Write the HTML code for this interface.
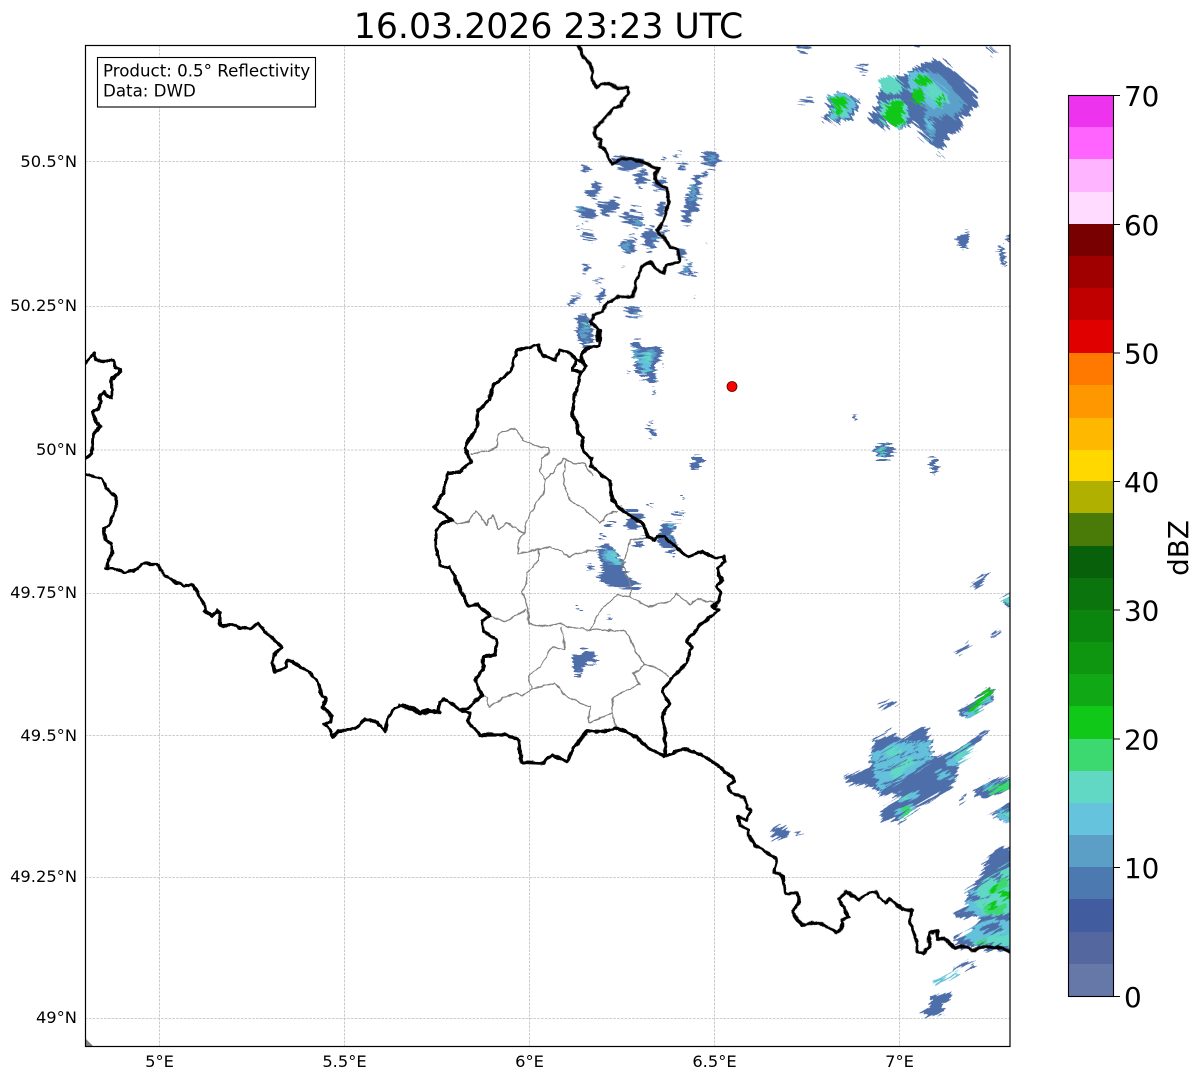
<!DOCTYPE html>
<html><head><meta charset="utf-8"><title>Radar</title>
<style>html,body{margin:0;padding:0;background:#fff}svg{display:block}text{font-family:"DejaVu Sans",sans-serif;fill:#000}</style></head>
<body>
<svg xmlns="http://www.w3.org/2000/svg" width="1202" height="1081" viewBox="0 0 1202 1081">
<defs><clipPath id="ax"><rect x="86" y="46" width="924" height="1000"/></clipPath>
<filter id="rag" filterUnits="userSpaceOnUse" x="-600" y="-600" width="2400" height="2300" color-interpolation-filters="sRGB">
<feTurbulence type="fractalNoise" baseFrequency="0.035 0.42" numOctaves="2" seed="4" result="n"/>
<feDisplacementMap in="SourceGraphic" in2="n" scale="15" xChannelSelector="R" yChannelSelector="G"/>
<feGaussianBlur stdDeviation=".35"/>
</filter>
<filter id="wig" filterUnits="userSpaceOnUse" x="0" y="0" width="1202" height="1081" color-interpolation-filters="sRGB">
<feTurbulence type="fractalNoise" baseFrequency="0.14" numOctaves="2" seed="9" result="n"/>
<feDisplacementMap in="SourceGraphic" in2="n" scale="4" xChannelSelector="R" yChannelSelector="G"/>
<feGaussianBlur stdDeviation=".3"/>
</filter>
</defs>
<rect width="1202" height="1081" fill="#fff"/>
<text x="548.5" y="38" font-size="34.7" text-anchor="middle">16.03.2026 23:23 UTC</text>
<g clip-path="url(#ax)">
<g stroke="#bdbdbd" stroke-width=".8" stroke-dasharray="2.6 1.2" fill="none">
<path d="M159.5 45V1046M344.5 45V1046M529.5 45V1046M714.5 45V1046M899.5 45V1046"/>
<path d="M85 161.5H1010M85 306.5H1010M85 450H1010M85 593.5H1010M85 735.5H1010M85 877.5H1010M85 1018.5H1010"/>
</g>
<path d="M85 1038L93 1046H85z" fill="#808080"/>

<!-- radar NE cell -->
<g transform="rotate(42 732 386)"><g filter="url(#rag)"><g transform="rotate(-42 732 386)">
<g transform="translate(560 40) scale(.33333)">
<g fill="#4e6ea9">
<path d="M1040 100L1105 60 1150 62 1245 150 1258 195 1205 240 1205 262 1165 290 1148 325 1110 315 1080 270 1060 245 1020 270 975 258 925 243 955 185 965 110 1010 115z"/>
<path d="M800 170L850 155 900 180 885 210 875 240 830 247 782 235 810 215z"/>
<path d="M1132 335L1135 335 1158 358 1155 360z"/>
<path d="M1275 17L1290 20 1308 38 1300 42z"/>
</g>
<g fill="#5ba0c8">
<path d="M1100 90L1150 110 1215 190 1195 225 1150 230 1095 240 1100 205 1060 180 1040 100z"/>
<path d="M1095 240L1130 265 1120 290 1095 275z"/>
</g>
<g fill="#63c1db">
<path d="M800 168L855 158 885 185 860 240 810 235 820 205z"/>
<path d="M960 190L1030 180 1048 235 1020 268 965 245z"/>
<path d="M1042 100L1090 92 1160 155 1170 180 1130 205 1095 190 1045 150z"/>
<path d="M1095 240L1120 245 1125 265 1105 265z"/><path d="M1100 285L1125 295 1115 305z"/>
</g>
<g fill="#60d8c4">
<path d="M965 110L1010 115 1040 140 1005 168 958 140z"/>
<path d="M960 195L1000 180 1040 200 1040 245 1015 268 968 248z"/>
<path d="M805 210L860 205 860 235 820 228z"/>
<path d="M1100 105L1140 150 1160 180 1130 200 1100 165z"/>
</g>
<g fill="#10c818">
<path d="M985 190L1025 190 1030 245 1000 265 970 235z"/>
<path d="M1055 145L1090 150 1095 180 1072 190 1050 170z"/>
<path d="M1060 115L1095 105 1115 130 1085 140z"/>
<path d="M1120 178L1150 170 1135 198z"/>
<path d="M815 170L860 175 860 200 835 212 818 198z"/><path d="M805 208L850 212 835 228z"/>
</g>
</g>
</g></g></g>

<!-- radar north -->
<g transform="rotate(8 732 386)"><g filter="url(#rag)"><g transform="rotate(-8 732 386)">
<g transform="translate(560 40) scale(.33333)">
<g fill="#4e6ea9">
<path d="M887 78L920 75 925 100 905 102z"/><path d="M718 180L745 172 763 182 735 192z"/>
<path d="M716 20H752V34H716z"/><path d="M1055 17H1090L1075 28z"/>
<path d="M430 335H468L480 352 462 385 440 380z"/>
<path d="M160 352L250 350 245 385 205 395 165 375z"/><path d="M228 400L258 398 262 432 240 445 228 425z"/>
<path d="M308 350H320V362H308zM342 340H355V353H342zM352 372L376 370 378 392 358 395z"/>
<path d="M405 408L448 393 450 405 420 412 420 460 432 463 415 470 412 505 390 520 395 555 365 545 380 470z"/>
<path d="M278 420L312 412 318 445 290 452z"/><path d="M295 490L315 488 310 525 290 515z"/>
<path d="M65 372L88 380 90 395 65 403 60 395z"/><path d="M105 425L125 428 115 465 92 475 85 460z"/>
<path d="M112 490L170 475 175 505 130 525z"/><path d="M40 510L70 492 105 510 110 535 90 540 65 535z"/>
<path d="M182 518L200 520 205 530 245 530 252 560 225 570 195 540z"/><path d="M215 500H242V510H215z"/>
<path d="M55 560L72 548 60 566zM62 575L105 585 98 608 75 600z"/>
<path d="M180 605L220 585 230 625 205 640 188 630z"/><path d="M250 575L275 560 305 595 270 635 250 605z"/><path d="M295 565H322L310 582z"/>
<path d="M70 678L90 670 85 695 70 697z"/><path d="M110 712L124 710 118 728 108 725z"/><path d="M108 770L130 742 135 770 115 785z"/><path d="M28 785L60 758 62 770 35 795z"/>
<path d="M198 808L238 802 240 832 200 828z"/>
<path d="M50 825L85 820 95 870 95 900H55z"/>
<path d="M348 630L375 630 378 660 355 665z"/><path d="M362 690L390 668 395 685 385 705 365 705z"/><path d="M393 695H410V710H393z"/>
<path d="M190 678L198 676 195 684z"/><path d="M398 770H406V777H398z"/>
<path d="M1312 620L1322 620 1338 680 1330 678z"/><path d="M1340 590L1350 585V605L1340 600z"/>
<path d="M1195 585L1225 575 1222 610 1208 628 1198 610z"/>
<path d="M448 606L465 610 450 610z"/>
</g>
<g fill="#5ba0c8">
<path d="M225 540L250 545 245 560 225 560z"/><path d="M450 345L470 352 450 370z"/><path d="M45 505L65 495 70 515 50 520z"/>
<path d="M285 585L300 590 290 610 275 605z"/><path d="M190 610L215 600 210 625 190 625z"/><path d="M62 850L85 845 88 885 65 890z"/><path d="M225 810L238 810 235 830 225 828z"/><path d="M370 680L390 672 385 690 370 695z"/><path d="M395 430L410 430 405 490 390 490z"/>
</g>
<path d="M70 845L85 850 80 870 70 868z" fill="#60d8c4"/>
</g>
</g></g></g>

<!-- radar middle -->
<g filter="url(#rag)">
<g transform="translate(400 330) scale(.33333)">
<g fill="#4e6ea9">
<path d="M537 5L570 0 578 35 555 50 538 35z"/>
<path d="M692 42L715 30 735 60 762 45 790 48 785 80 762 110 772 160 758 160 750 140 725 142 700 115 710 70z"/>
<path d="M680 122H690V130H680zM788 98H795V106H788z"/><path d="M757 188L768 186 764 200z"/>
<path d="M742 290L760 292 772 315 760 322z"/><path d="M755 274H760V279H755z"/>
<path d="M885 375L908 378 905 405 885 418 872 412z"/>
<path d="M663 528L700 545 725 550 732 575 705 598 668 590 690 565z"/>
<path d="M733 515L752 525 745 532z"/><path d="M842 500H850V506H842z"/><path d="M820 547L852 548 850 560 825 558z"/>
<path d="M790 572L840 578 820 600 830 650 825 672 770 640 775 610z"/>
<path d="M705 635L735 630 735 650 715 655z"/>
<path d="M612 582H633V594H612z"/><path d="M600 610L614 615 615 628 603 625z"/>
<path d="M588 650L630 645 672 690 670 715 680 735 718 765 700 775 660 775 590 745 610 720z"/>
<path d="M560 705L578 702 582 720 568 722z"/>
<path d="M532 838H543V845H532zM618 856H630V862H618z"/>
<path d="M545 952L585 968 588 1002 560 995 540 1035 520 1030 518 975 540 975z"/>
</g>
<g fill="#5ba0c8">
<path d="M545 5L565 5 565 30 550 35z"/>
<path d="M700 60L725 75 760 60 770 70 750 105 740 130 710 110z"/>
<path d="M600 655L632 655 660 690 650 710 612 695z"/>
<path d="M800 610L815 615 820 640z"/>
</g>
<g fill="#63c1db"><path d="M715 80L755 68 750 115 738 135 715 100z"/><path d="M615 665L640 660 668 695 650 708 622 690z"/><path d="M800 578L835 580 815 592z"/></g>
<g fill="#60d8c4"><path d="M730 75L755 70 745 100z"/><path d="M640 670L665 695 645 695z"/><path d="M735 120L748 125 740 135z"/></g>
</g>
</g>

<!-- radar south east -->
<g transform="rotate(-30 732 386)"><g filter="url(#rag)"><g transform="rotate(30 732 386)">
<g transform="translate(820 680) scale(.33333)">
<g fill="#4e6ea9">
<path d="M180 72L232 62V72L185 88z"/>
<path d="M415 92L510 20 522 35 515 65 430 118z"/>
<path d="M70 292L150 262 165 190 145 185 215 158 235 180 320 142 340 230 400 215 500 150 505 157 420 235 415 270 390 330 335 350 290 385 240 425 180 415 195 380 230 345 180 345 160 320 100 315z"/>
<path d="M460 335L520 295 565 290 555 330 490 355z"/>
<path d="M420 358L438 350 440 356 422 364z"/>
<path d="M503 405L570 368V425L550 430 530 405z"/>
<path d="M400 700L440 680 440 640 495 572 490 555 530 510 590 505V810L520 812 410 792 398 775 450 760 480 710 420 710z"/>
<path d="M398 865L460 842 463 855 400 878z"/>
<path d="M325 950L390 940 392 955 365 965 372 1000 320 1015 300 995 330 985 335 962z"/>
</g>
<g fill="#63c1db">
<path d="M160 215L240 185 325 185 335 235 290 270 230 310 180 340 165 290z"/>
<path d="M380 240L450 195 460 210 400 260z"/><path d="M350 280L385 265 395 295 355 305z"/>
<path d="M230 345L300 330 290 355 240 362z"/><path d="M220 395L285 375 280 395 240 412z"/>
<path d="M490 320L555 295 555 320 510 340z"/>
<path d="M530 395L585 375V425L548 428z"/>
<path d="M445 635L530 590 590 570V700L480 710 440 680z"/>
<path d="M430 770L500 720 590 720V800L460 795z"/>
<path d="M345 903L410 878 412 888 350 913z"/>
<path d="M430 100L510 45 515 60 440 118z"/>
</g>
<g fill="#60d8c4">
<path d="M195 208L240 205 240 228 200 228z"/><path d="M205 260L270 235 290 255 220 295z"/>
<path d="M405 225L445 200 452 212 412 242z"/><path d="M235 345L270 338 260 355z"/>
<path d="M475 610L590 540V700L500 705 470 680z"/>
<path d="M450 790L530 760 590 760V800L470 797z"/>
</g>
<g fill="#3cd870"><path d="M245 390L272 380 270 402 250 405z"/><path d="M465 785L505 770 500 795 475 797z"/><path d="M500 625L560 585V620L520 640z"/><path d="M490 680L555 670 555 700 500 705z"/></g>
<g fill="#10c818">
<path d="M440 92L505 25 522 35 465 92z"/>
<path d="M515 322L555 302 558 316 525 335z"/><path d="M563 388H585V415H563z"/>
<path d="M535 635L590 625V655L540 652z"/>
<path d="M510 625L535 620 525 640z"/><path d="M490 675L530 670 520 690z"/>
</g>
<g fill="#4e6ea9"><path d="M265 300L330 270 360 300 340 330 250 340z"/><path d="M480 745L520 725 550 735 540 755 490 760z"/><path d="M440 645L475 640 470 660 445 660z"/><path d="M515 590L545 570 545 590 520 600z"/></g>
<g stroke="#4e6ea9" stroke-width="4" fill="none"><path d="M165 245L300 215M170 270L320 235M190 315L290 275M210 180L300 195M460 660L520 650M530 600L570 590"/></g>
</g>
<g fill="#4e6ea9">
<path d="M773 827L786 826 787 839 772 839z"/><path d="M794 834H802V836H794z"/>
<path d="M970 587L985 572 987 576 976 591z"/>
<path d="M1000 600L1016 590V612z"/>
<path d="M955 652L968 643 970 647 958 656z"/><path d="M990 636L999 628 1000 630 992 638z"/>
<path d="M1000 808L1016 802V824z"/>
<path d="M975 793L1014 778V790L985 798z"/>
</g>
<path d="M1000 600L1016 592V606z" fill="#60d8c4"/><path d="M1003 812L1016 808V820z" fill="#60d8c4"/>
<path d="M987 790L1010 781V788L990 795z" fill="#3cd870"/>
</g></g></g>

<!-- radar east scattered -->
<g filter="url(#rag)">
<g fill="#4e6ea9">
<path d="M853 415L857 416 855 420z"/>
<path d="M872 447L886 443 896 452 886 459 876 459z"/>
<path d="M928 462L936 458 938 470 932 473z"/>
<path d="M958 236L968 232 966 247 960 245z"/>
<path d="M998 248L1001 248 1006 265 1004 266z"/><path d="M1007 235L1014 230V242H1007z"/>
<path d="M697 458L703 456 701 468 692 469z"/>
</g>
<path d="M876 448L884 446 886 455 878 456z" fill="#63c1db"/><path d="M879 450L884 449 883 454z" fill="#10c818"/>
</g>

<!-- canton borders -->
<g filter="url(#wig)">
<g transform="translate(400 330) scale(.33333)" fill="none" stroke="#808080" stroke-width="4" stroke-linejoin="round">
<path d="M212 372L240 368 290 355 295 310 345 295 370 330 410 350 445 352 450 370 425 385 420 425 438 450 430 490 400 535 378 575 375 610"/>
<path d="M150 570L175 582 205 575 230 543 260 585 278 555 295 600 320 578 372 610 355 630 355 670 415 658 450 650 485 665 505 682 550 665 590 660"/>
<path d="M438 450L490 385 520 400 555 400 580 440"/>
<path d="M498 385L490 460 510 510 555 540 600 580 625 550 655 545"/>
<path d="M415 660L415 690 380 730 380 760 365 785 385 840 385 880 430 890 480 880 500 890 570 900 585 870 600 840 650 795 690 800 745 830 810 815 830 790 870 825 890 805 945 820"/>
<path d="M690 800L695 770 665 700 680 670 690 630 740 625"/>
<path d="M268 855L315 875 380 840"/>
<path d="M570 900L610 898 680 905 705 960 735 1005 765 1010 805 1040"/>
<path d="M735 1005L700 1030 720 1065 690 1075 640 1100 635 1150 650 1195"/>
<path d="M485 890L495 960 455 950 420 1010 385 1035 395 1075 465 1060 490 1090 510 1105 570 1130 565 1180 635 1150"/>
<path d="M395 1075L370 1098 345 1090 280 1120 268 1130 262 1100 245 1095"/>
</g>

<!-- national borders -->
<g fill="none" stroke="#000" stroke-linejoin="round" stroke-linecap="round">
<g transform="translate(560 40) scale(.33333)" stroke-width="9.6">
<path d="M55 18L70 50 90 70 100 100 95 115 110 145 125 130 150 132 170 143 205 143 205 160 185 185 185 197 160 205 130 240 103 265 105 290 125 300 118 318 135 330 155 372 185 358 215 358 245 365 270 375 298 385 285 400 288 425 305 440 322 445 325 480 318 520 305 555 290 572 310 590 330 620 355 630 360 665 320 675 310 700 280 680 270 668 245 680 230 720 225 745 218 770 180 770 140 790 125 815 100 825 92 845 115 870 112 900"/>
</g>
<g transform="translate(400 330) scale(.33333)" stroke-width="9.6">
<path d="M600 0L600 45 560 55 545 70 545 92 560 110 545 125 518 122 530 92 545 92M540 125L535 170 522 200 520 240 515 255 530 275 535 310 550 325 545 345 550 365 575 385 572 405 590 420 600 435 630 450 632 485 640 510 660 535 700 565 730 580 745 620 765 630 770 620 795 620 825 650 865 680 905 665 945 685 970 680 975 695 950 715 965 750 950 770 965 790 950 825 935 830 955 840 940 855 895 890 860 935 875 950 860 1000 810 1050 785 1085 810 1120 785 1160 795 1200 795 1280"/>
<path d="M795 1280L745 1255 695 1210 650 1195 600 1205 560 1205 525 1250 500 1295 455 1275 430 1300 365 1297 355 1230 325 1215 240 1215 205 1175 210 1150 180 1140 133 1108 120 1115 115 1145 100 1145 60 1150 0 1125"/>
<path d="M180 1140L205 1135 245 1095 225 1050 250 1020 250 980 285 975 290 930 250 905 245 875 268 855 235 825 205 828 170 755 150 710 118 708 108 650 108 605 120 580 155 570 103 530 130 490 145 430 180 425 212 397 195 350 230 290 235 240 270 210 280 165 330 125 352 60 415 45 425 75 465 90 478 60 510 70 530 92"/>
<path d="M795 1280L850 1255 905 1275 945 1300 1000 1345"/>
</g>
<g transform="translate(640 720) scale(.33333)" stroke-width="9.6">
<path d="M279 174L285 182 263 200 275 220 315 235 320 265 335 270 320 298 295 290 300 315 325 330 325 345 345 375 385 400 410 418 402 455 430 470 435 520 470 520 480 545 458 575 485 615 535 607 590 637 605 625 605 600 625 590 610 560 595 535 620 515 655 538 690 517 710 518 735 550 750 538 790 570 815 570 810 610 830 660 830 695 850 700 868 680 868 640 895 632 890 655 915 655 945 685 965 678 995 690 1040 680 1085 685 1115 698"/>
</g>
<g transform="translate(80 340) scale(.33333)" stroke-width="9.6">
<path d="M10 72L16 70 40 40 50 62 100 63 110 85 123 90 95 120 95 172 80 165 70 155 60 170 62 190 55 208 37 218 45 240 62 258 40 285 35 340 18 358 10 362"/>
<path d="M10 402L65 415 80 445 108 470 108 510 85 555 72 565 78 600 92 610 97 640 77 685 95 683 120 692 135 697 160 692 175 687 185 672 230 672 255 708 312 738 337 733 375 795 372 812 395 828 410 813 420 820 420 857 470 855 480 862 510 866 537 850 555 875 607 923 590 935 575 965 585 995 615 985 622 960 675 985 715 1025 725 1068 740 1073 727 1100 755 1128 752 1145 733 1155 750 1165 758 1190 775 1173 800 1172 830 1162 855 1137 893 1147 915 1175 925 1130 945 1105 970 1095 1005 1105 1020 1118 1045 1110 1060 1118 1080 1115"/>
</g>
</g>
</g>
<circle cx="732" cy="386.5" r="5" fill="#f00" stroke="#500" stroke-width=".8"/>
</g>

<rect x="85.5" y="45.5" width="924.5" height="1001" fill="none" stroke="#000" stroke-width="1.2"/>
<rect x="97.5" y="57.5" width="218" height="49.5" fill="#fff" stroke="#000" stroke-width="1.1"/>
<text x="103" y="76.5" font-size="16.67">Product: 0.5° Reflectivity</text>
<text x="103" y="96.5" font-size="16.67">Data: DWD</text>

<g font-size="16.3" text-anchor="end">
<text x="77" y="167">50.5°N</text><text x="77" y="311">50.25°N</text><text x="77" y="455">50°N</text><text x="77" y="598">49.75°N</text><text x="77" y="741">49.5°N</text><text x="77" y="882">49.25°N</text><text x="77" y="1023">49°N</text>
</g>
<g font-size="16.3" text-anchor="middle">
<text x="159.5" y="1067">5°E</text><text x="344.5" y="1067">5.5°E</text><text x="529.5" y="1067">6°E</text><text x="714.5" y="1067">6.5°E</text><text x="899.5" y="1067">7°E</text>
</g>

<!-- colorbar -->
<g shape-rendering="crispEdges">
<rect x="1068" y="95" width="45" height="32.5" fill="#ee33ee"/>
<rect x="1068" y="127" width="45" height="32.5" fill="#ff64ff"/>
<rect x="1068" y="159" width="45" height="33" fill="#ffb4ff"/>
<rect x="1068" y="192" width="45" height="32" fill="#ffdcff"/>
<rect x="1068" y="224" width="45" height="32" fill="#780000"/>
<rect x="1068" y="256" width="45" height="32" fill="#a00000"/>
<rect x="1068" y="288" width="45" height="32" fill="#c00000"/>
<rect x="1068" y="320" width="45" height="33" fill="#e00000"/>
<rect x="1068" y="353" width="45" height="32" fill="#ff7800"/>
<rect x="1068" y="385" width="45" height="33" fill="#ff9800"/>
<rect x="1068" y="418" width="45" height="32" fill="#ffb800"/>
<rect x="1068" y="450" width="45" height="31" fill="#ffd800"/>
<rect x="1068" y="481" width="45" height="32" fill="#b0b000"/>
<rect x="1068" y="513" width="45" height="33" fill="#4a7a08"/>
<rect x="1068" y="546" width="45" height="32" fill="#08600a"/>
<rect x="1068" y="578" width="45" height="32" fill="#0b740c"/>
<rect x="1068" y="610" width="45" height="32" fill="#0c850f"/>
<rect x="1068" y="642" width="45" height="32" fill="#0e9610"/>
<rect x="1068" y="674" width="45" height="32" fill="#10a814"/>
<rect x="1068" y="706" width="45" height="33" fill="#10c818"/>
<rect x="1068" y="739" width="45" height="32" fill="#3cd870"/>
<rect x="1068" y="771" width="45" height="32" fill="#60d8c4"/>
<rect x="1068" y="803" width="45" height="32" fill="#66c3dd"/>
<rect x="1068" y="835" width="45" height="32" fill="#5b9fc6"/>
<rect x="1068" y="867" width="45" height="32" fill="#4c7ab0"/>
<rect x="1068" y="899" width="45" height="33" fill="#425ca0"/>
<rect x="1068" y="932" width="45" height="32" fill="#54679f"/>
<rect x="1068" y="964" width="45" height="32.5" fill="#6678a8"/>
</g>
<rect x="1068.5" y="95.5" width="45" height="901" fill="none" stroke="#000" stroke-width="1.1"/>
<path d="M1113 95.5h7M1113 224.5h7M1113 353h7M1113 481.5h7M1113 610h7M1113 739h7M1113 867.5h7M1113 996.5h7" stroke="#000" stroke-width="1.1"/>
<g font-size="27.8">
<text x="1124" y="106">70</text><text x="1124" y="235">60</text><text x="1124" y="363.5">50</text><text x="1124" y="492">40</text><text x="1124" y="620.5">30</text><text x="1124" y="749.5">20</text><text x="1124" y="878">10</text><text x="1124" y="1007">0</text>
</g>
<text transform="translate(1188 548) rotate(-90)" font-size="27.8" text-anchor="middle">dBZ</text>
</svg>
</body></html>
